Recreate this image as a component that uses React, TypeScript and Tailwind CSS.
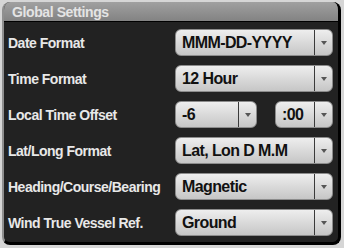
import React from "react";

function Select({ value, className }: { value: string; className: string }) {
  return (
    <div
      className={`flex h-[27px] rounded-[6px] border border-[#8c8c8c] bg-linear-to-b from-[#eeeeee] to-[#c6c6c6] ${className}`}
    >
      <div className="flex-1 flex items-center pl-[6px] text-[16px] tracking-[-0.6px] font-bold text-[#111] leading-none">
        {value}
      </div>
      <div className="w-[18px] border-l border-[#3a3a3a] flex items-center justify-center">
        <div className="w-0 h-0 border-l-[3.5px] border-r-[3.5px] border-t-[4px] border-l-transparent border-r-transparent border-t-[#555]" />
      </div>
    </div>
  );
}

function Row({ label, children }: { label: string; children: React.ReactNode }) {
  return (
    <div className="flex items-center h-[27px]">
      <div className="w-[171px] pl-[4px] text-[14px] tracking-[-0.5px] font-bold text-[#e8e8e8] leading-none">
        {label}
      </div>
      {children}
    </div>
  );
}

export default function App() {
  return (
    <div
      className="w-[344px] h-[248px] bg-[#d6d6d6] pl-[2px] pr-[3px] pt-[2px] pb-[3px]"
      style={{ fontFamily: '"Liberation Sans", Arial, sans-serif' }}
    >
      <div className="h-full flex flex-col rounded-[8px] overflow-hidden border-l-2 border-[#8f8f8f] border-r-[3px] border-b-[3px] border-r-black border-b-black bg-[#222]">
        {/* header bar */}
        <div className="h-[20px] shrink-0 flex items-center pl-[8px] bg-linear-to-b from-[#a0a0a0] to-[#838383] border-b border-black">
          <span className="text-[14px] tracking-[-0.4px] font-bold text-[#e4e4e4] leading-none">
            Global Settings
          </span>
        </div>

        <div className="flex flex-col gap-[9px] pt-[7px]">
          <Row label="Date Format">
            <Select value="MMM-DD-YYYY" className="w-[158px]" />
          </Row>
          <Row label="Time Format">
            <Select value="12 Hour" className="w-[158px]" />
          </Row>
          <Row label="Local Time Offset">
            <div className="flex w-[158px] justify-between">
              <Select value="-6" className="w-[82px]" />
              <Select value=":00" className="w-[58px]" />
            </div>
          </Row>
          <Row label="Lat/Long Format">
            <Select value="Lat, Lon D M.M" className="w-[158px]" />
          </Row>
          <Row label="Heading/Course/Bearing">
            <Select value="Magnetic" className="w-[158px]" />
          </Row>
          <Row label="Wind True Vessel Ref.">
            <Select value="Ground" className="w-[158px]" />
          </Row>
        </div>
      </div>
    </div>
  );
}
